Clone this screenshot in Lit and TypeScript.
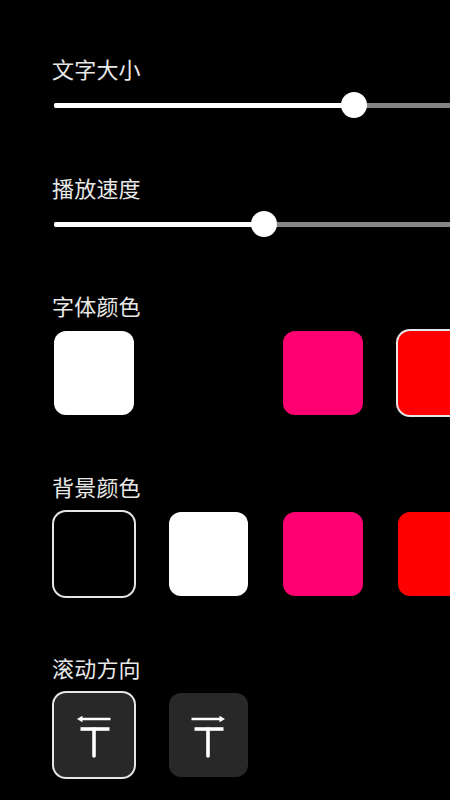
import { LitElement, html, css, svg } from "lit";
import { customElement } from "lit/decorators.js";

const icon = (dir: "left" | "right") => html`<svg class="icon" viewBox="0 0 48 48" fill="none" stroke="#fff">
  ${dir === "left"
    ? svg`<path d="M10 8H40.5" stroke-width="2.5"/><path d="M7 8L12.5 4.8V11.2Z" fill="#fff" stroke="none"/>`
    : svg`<path d="M7.5 8H38" stroke-width="2.5"/><path d="M41 8L35.5 4.8V11.2Z" fill="#fff" stroke="none"/>`}
  <path d="M10.5 18H39.5" stroke-width="3.6"/>
  <path d="M24 18V45" stroke-width="3.6" stroke-linecap="round"/>
</svg>`;

@customElement("app-root")
export class AppRoot extends LitElement {
  static styles = css`
    :host {
      display: block;
      width: 450px;
      height: 800px;
      overflow: hidden;
      background: #000;
      font-family: "Noto Sans CJK SC", "Noto Sans", sans-serif;
      color: #e8e8e8;
    }
    .page { display: flex; flex-direction: column; padding: 55px 0 0 54px; }
    .sec { display: flex; flex-direction: column; }
    .sec.slider { gap: 5px; margin-bottom: 54px; }
    .sec.slider + .sec.slider { margin-bottom: 53px; }
    .sec.pick { gap: 9px; margin-bottom: 58px; }
    .label { font-size: 22px; font-weight: 400; line-height: 26px; height: 30px; margin-left: -2px; letter-spacing: 0.2px; }
    .track { position: relative; height: 30px; width: 420px; display: flex; align-items: center; }
    .rail { width: 100%; height: 5px; background: #858585; display: flex; border-radius: 2px; }
    .fill { height: 100%; background: #fff; border-radius: 2px; }
    .thumb {
      position: absolute; top: 2px; width: 26px; height: 26px; margin-left: -13px;
      border-radius: 50%; background: #fff;
    }
    .row { display: flex; gap: 35px; width: 500px; }
    .sw {
      flex: none; width: 79.5px; height: 84px; border-radius: 12px;
      display: flex; align-items: center; justify-content: center;
    }
    .sw.sel { box-shadow: 0 0 0 2px #e6e6e6; border-radius: 12px; }
    .white { background: #fff; }
    .black { background: #000; }
    .pink { background: #fe0072; }
    .red { background: #fe0000; }
    .dark { background: #282828; }
    .icon { width: 48px; height: 48px; flex: none; }
  `;

  private slider(label: string, pos: number) {
    return html`<div class="sec slider">
      <div class="label">${label}</div>
      <div class="track">
        <div class="rail"><div class="fill" style="width:${pos}px"></div></div>
        <div class="thumb" style="left:${pos}px"></div>
      </div>
    </div>`;
  }

  private picker(label: string, items: [string, boolean][]) {
    return html`<div class="sec pick">
      <div class="label">${label}</div>
      <div class="row">
        ${items.map(([c, s]) => html`<div class="sw ${c} ${s ? "sel" : ""}"></div>`)}
      </div>
    </div>`;
  }

  render() {
    return html`<div class="page">
      ${this.slider("文字大小", 300)}
      ${this.slider("播放速度", 210)}
      ${this.picker("字体颜色", [["white", false], ["black", false], ["pink", false], ["red", true]])}
      ${this.picker("背景颜色", [["black", true], ["white", false], ["pink", false], ["red", false]])}
      <div class="sec pick">
        <div class="label">滚动方向</div>
        <div class="row">
          <div class="sw dark sel">${icon("left")}</div>
          <div class="sw dark">${icon("right")}</div>
        </div>
      </div>
    </div>`;
  }
}
